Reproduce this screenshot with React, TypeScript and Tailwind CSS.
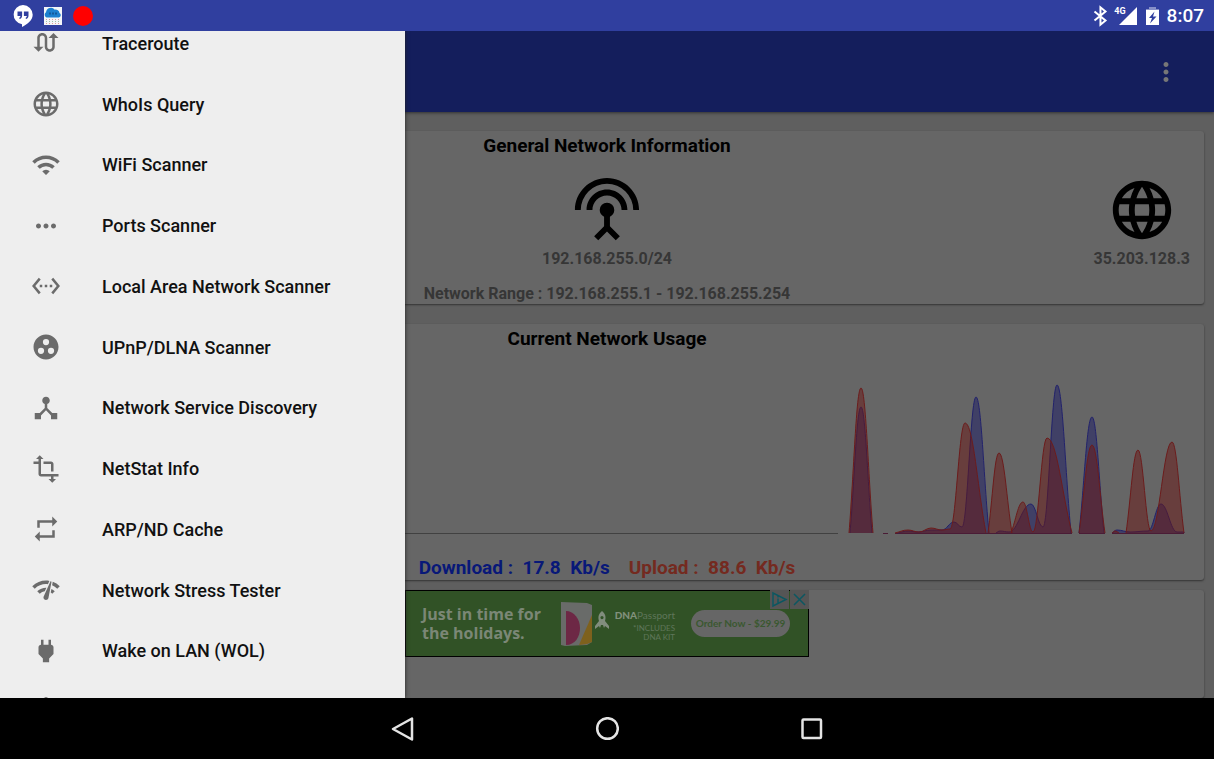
import type { ComponentType, ReactNode } from "react";
import {
  MdGroupWork,
  MdLanguage,
  MdMoreHoriz,
  MdMoreVert,
  MdNetworkCheck,
  MdPower,
  MdRepeat,
  MdSettingsEthernet,
  MdSettingsInputAntenna,
  MdSwapCalls,
  MdTransform,
  MdWifi,
} from "react-icons/md";

type IconType = ComponentType<{ className?: string }>;

const menu: { label: string; icon: IconType }[] = [
  { label: "Traceroute", icon: MdSwapCalls },
  { label: "WhoIs Query", icon: MdLanguage },
  { label: "WiFi Scanner", icon: MdWifi },
  { label: "Ports Scanner", icon: MdMoreHoriz },
  { label: "Local Area Network Scanner", icon: MdSettingsEthernet },
  { label: "UPnP/DLNA Scanner", icon: MdGroupWork },
  { label: "Network Service Discovery", icon: HubIcon },
  { label: "NetStat Info", icon: MdTransform },
  { label: "ARP/ND Cache", icon: MdRepeat },
  { label: "Network Stress Tester", icon: MdNetworkCheck },
  { label: "Wake on LAN (WOL)", icon: MdPower },
];

function HubIcon({ className }: { className?: string }) {
  return (
    <svg viewBox="0 0 24 24" fill="currentColor" className={className} aria-hidden="true">
      <path d="M17 16l-4-4V8.82C14.16 8.4 15 7.3 15 6c0-1.66-1.34-3-3-3S9 4.34 9 6c0 1.3.84 2.4 2 2.82V12l-4 4H3v5h5v-3.05l4-4.2 4 4.2V21h5v-5h-4z" />
    </svg>
  );
}

function ShieldIcon({ className }: { className?: string }) {
  return (
    <svg viewBox="0 1 24 24" fill="currentColor" className={className} aria-hidden="true">
      <path d="M12 1L3 5v6c0 5.550 3.840 10.740 9 12 5.160-1.260 9-6.450 9-12V5z" />
    </svg>
  );
}

const BASE = 533;

type Point = [number, number];

/* Smooth line through the samples: flat at crests, leaning where it leaves the base line. */
function curve(points: Point[]) {
  let d = `M${points[0][0]} ${points[0][1]}`;
  for (let i = 1; i < points.length; i++) {
    const [x0, y0] = points[i - 1];
    const [x1, y1] = points[i];
    const dx = (x1 - x0) * 0.4;
    const lean = (y1 - y0) * 0.4;
    const c0 = y0 >= BASE ? y0 + lean : y0;
    const c1 = y1 >= BASE ? y1 - lean : y1;
    d += `C${x0 + dx} ${c0} ${x1 - dx} ${c1} ${x1} ${y1}`;
  }
  return d;
}

const download: Point[][] = [
  [[850, 533], [861, 407], [872, 533]],
  [[898, 533], [908, 531], [918, 532], [931, 530], [942, 530], [954, 522], [962, 527], [976, 397], [989, 533]],
  [[996, 533], [1000, 531], [1009, 532], [1031, 504], [1043, 527], [1057, 385], [1071, 533]],
  [[1079, 533], [1092, 417], [1104, 533]],
  [[1112, 533], [1117, 530], [1130, 532], [1148, 531], [1161, 504], [1177, 532], [1184, 532], [1184, 533]],
];

const upload: Point[][] = [
  [[849, 533], [861, 388], [873, 533]],
  [[895, 533], [908, 530], [919, 532], [931, 528], [942, 530], [950, 529], [965, 423], [986, 533]],
  [[988, 533], [999, 453], [1012, 533]],
  [[1011, 533], [1023, 502], [1033, 532], [1047, 438], [1072, 533]],
  [[1079, 533], [1092, 445], [1105, 533]],
  [[1112, 533], [1115, 531], [1119, 533]],
  [[1126, 533], [1138, 450], [1151, 531], [1172, 442], [1184, 533]],
];

function UsageChart() {
  return (
    <svg
      viewBox="10 370 1194 170"
      preserveAspectRatio="none"
      className="h-[170px] w-full"
      role="img"
      aria-label="Network usage over time"
    >
      <path d="M10 533.5H838" stroke="#414141" />
      <path d="M883 533.5H888M895 533.5H1072M1079 533.5H1105M1112 533.5H1184" stroke="#4a1c36" />
      {download.map((points, i) => (
        <path key={i} d={curve(points)} fill="#1a1a66" fillOpacity="0.5" stroke="#22226c" />
      ))}
      {upload.map((points, i) => (
        <path key={i} d={curve(points)} fill="#6a1614" fillOpacity="0.5" stroke="#6c1c1c" />
      ))}
    </svg>
  );
}

function Card({ title, className, children }: { title?: string; className: string; children?: ReactNode }) {
  return (
    <section className={`rounded-[3px] bg-[#666] shadow-[0_1px_2px_#333] ${className}`}>
      {title && <h2 className="pt-[3px] text-center text-[19px] leading-6 font-bold text-black">{title}</h2>}
      {children}
    </section>
  );
}

function StatusBar() {
  return (
    <header className="flex h-[31px] shrink-0 items-center justify-between bg-[#303f9f] pr-[10px] pl-[13px] text-white">
      <div className="flex items-center gap-[10px]">
        <svg viewBox="0 0 20 22" className="h-[22px] w-5" aria-label="Hangouts">
          <path d="M10 0a9.7 9.7 0 0 0-1 19.3V22c5-2.500 10.700-6.500 10.700-12.200A9.800 9.800 0 0 0 10 0z" fill="#fff" />
          <path d="M4.500 6.500h4.600v4.300c0 2-1.200 3-2.700 3.200v-1.500c.8-.3 1-.8 1-1.500H4.500zM10.900 6.500h4.600v4.300c0 2-1.200 3-2.700 3.200v-1.500c.8-.3 1-.8 1-1.500h-2.900z" fill="#303f9f" />
        </svg>
        <svg viewBox="0 0 20 18" className="h-[18px] w-5" aria-label="Weather">
          <path d="M1 0h18v18H1z" fill="#f4f6f8" />
          <path d="M3.500 10.500a3 3 0 0 1-.5-5.300 5 5 0 0 1 8.800-2.500 4 4 0 0 1 4.700 3.200 2.500 2.500 0 0 1-.6 4.600z" fill="#1d80cf" />
          <path d="M6 6.500h8" stroke="#155a9c" strokeWidth="2" strokeDasharray="2 1" />
          <path d="M3 12.500h15M3 16.500h15" stroke="#e29a9a" strokeDasharray="1 2" />
          <path d="M3 14.500h15" stroke="#9cbfa6" strokeDasharray="1 2" />
        </svg>
        <span className="size-5 rounded-full bg-[#f00]" />
      </div>
      <div className="flex items-center">
        <svg viewBox="0 0 24 24" className="size-[22px]" aria-label="Bluetooth">
          <path
            d="M6 7l12 10-5.500 4.500v-19L18 7 6 17"
            fill="none"
            stroke="#fff"
            strokeWidth="2.200"
          />
        </svg>
        <span className="ml-[3px] -mt-[9px] text-[9px] leading-[10px] font-bold">4G</span>
        <svg viewBox="0 0 18 18" className="-ml-[7px] size-[18px]" aria-label="Signal">
          <path d="M18 0v18H0z" fill="#fff" />
        </svg>
        <svg viewBox="0 0 13 18" className="ml-[9px] h-[18px] w-[13px]" aria-label="Battery charging">
          <path d="M3 0h7v2h3v3H0V2h3z" fill="#8790c8" />
          <path d="M0 3h13v15H0z" fill="#fff" />
          <path d="M8.500 4.500L3 11h3l-2 5.500L10.500 9.500H7z" fill="#303f9f" />
        </svg>
        <span className="ml-2 text-[19px] leading-6 font-medium">8:07</span>
      </div>
    </header>
  );
}

function AdBanner() {
  return (
    <a
      href="#offer"
      className="relative mx-auto flex h-[67px] w-[404px] items-center border border-black bg-[#315226] pl-4 text-[#7b8776]"
    >
      <span className="w-[137px] font-['Open_Sans',sans-serif] text-[16px] leading-[19px] font-bold">
        Just in time for the holidays.
      </span>
      <svg viewBox="0 0 36 48" className="h-12 w-9 shrink-0" aria-hidden="true">
        <path d="M2 2l26 1 5 2v37l-5 3-22 1-4-1z" fill="#696b69" />
        <path d="M7 11c8 0 14 8 14 17 0 9-5 17-14 17z" fill="#6d2845" />
        <path d="M33 15v27l-5 2-8 1z" fill="#7e611d" />
      </svg>
      <svg viewBox="0 0 14 18" className="-mt-2 h-[18px] w-[14px] shrink-0" aria-hidden="true">
        <path d="M7 0c4 3 4 7 3 10l4 5v3l-4-3-1 2-1-3H6l-1 3-1-2-4 3v-3l4-5C3 7 3 3 7 0zm0 5a1.600 1.600 0 1 0 0 3.200A1.600 1.600 0 0 0 7 5z" fill="#818d7d" />
      </svg>
      <span className="flex w-[66px] flex-col items-end pt-1 font-['Lato',sans-serif] text-[8px] leading-[9px] text-[#5f765a]">
        <span className="pb-[3px] text-[10px] leading-3 whitespace-nowrap">
          <b className="font-black text-[#81907c]">DNA</b>Passport
        </span>
        <span>*INCLUDES</span>
        <span>DNA KIT</span>
      </span>
      <span className="ml-4 w-[99px] shrink-0 rounded-full bg-[#666] text-center font-['Lato',sans-serif] text-[10px] leading-[27px] font-bold whitespace-nowrap text-[#3a5830]">
        Order Now - $29.99
      </span>
      <span className="absolute -top-px -right-px flex gap-px">
        <svg viewBox="0 0 19 19" className="size-[19px] bg-[#555]" aria-hidden="true">
          <path d="M3 3v13l13-6.500zM8 8.500v5M8 6v1.500" fill="none" stroke="#0c5761" strokeWidth="1.500" />
        </svg>
        <svg viewBox="0 0 19 19" className="size-[19px] bg-[#555]" aria-hidden="true">
          <path d="M4 4l11 11M15 4L4 15" fill="none" stroke="#0c5761" strokeWidth="1.500" />
        </svg>
      </span>
    </a>
  );
}

function Drawer() {
  return (
    <nav className="absolute inset-y-0 left-0 w-1/3 overflow-hidden bg-[#eee] shadow-[0_0_4px_#222]">
      <ul className="-mt-[18px] grid h-[calc(100%+62px)] grid-rows-12">
        {menu.map(({ label, icon: Icon }) => (
          <li key={label} className="min-h-0">
            <a href="#tool" className="flex h-full items-center gap-[41px] pl-[31px] text-[18px] font-medium text-[#111]">
              <Icon className="size-[30px] text-[#6b6b6b]" />
              {label}
            </a>
          </li>
        ))}
        <li className="flex min-h-0 items-center pl-[31px]">
          <ShieldIcon className="size-[30px] text-[#6b6b6b]" />
        </li>
      </ul>
    </nav>
  );
}

export default function App() {
  return (
    <div className="flex h-screen flex-col overflow-hidden bg-black font-['Roboto',sans-serif]">
      <StatusBar />
      <div className="relative min-h-0 flex-1 overflow-hidden bg-[#5f5f5f]">
        <div className="flex h-full flex-col">
          <div className="flex h-[81px] shrink-0 items-center justify-end bg-[#141e5c] pr-[33px] text-[#777] shadow-[0_1px_3px_#333]">
            <button type="button" aria-label="More options">
              <MdMoreVert className="size-[30px]" />
            </button>
          </div>
          <main className="flex min-h-0 flex-1 flex-col px-[10px] pt-[19px]">
            <Card title="General Network Information" className="h-[173px] shrink-0">
              <div className="flex justify-center px-[14px] pt-[17px] text-[16px] leading-5 font-bold text-[#363636]">
                <div className="flex-1" />
                <div className="flex flex-col items-center">
                  <MdSettingsInputAntenna className="size-[70px] text-black" />
                  <span className="pt-1">192.168.255.0/24</span>
                </div>
                <div className="flex flex-1 justify-end">
                  <div className="flex flex-col items-center">
                    <MdLanguage className="size-[70px] text-black" />
                    <span className="pt-1">35.203.128.3</span>
                  </div>
                </div>
              </div>
              <p className="pt-[15px] text-center text-[16px] leading-5 font-bold text-[#363636]">
                Network Range : 192.168.255.1 - 192.168.255.254
              </p>
            </Card>
            <Card title="Current Network Usage" className="mt-5 h-[256px] shrink-0">
              <div className="pt-[19px]">
                <UsageChart />
              </div>
              <p className="flex justify-center gap-[19px] pt-4 text-[19px] leading-6 font-bold whitespace-pre">
                <span className="text-[#081878]">{"Download :  17.8  Kb/s"}</span>
                <span className="text-[#742a1f]">{"Upload :  88.6  Kb/s"}</span>
              </p>
            </Card>
            <Card className="mt-[10px] min-h-0 flex-1">
              <AdBanner />
            </Card>
          </main>
        </div>
        <Drawer />
      </div>
      <footer className="flex h-[61px] shrink-0 items-center justify-center gap-[180px] text-[#e4e4e4]">
        <button type="button" aria-label="Back">
          <svg viewBox="0 0 24 24" className="size-6" fill="none" stroke="currentColor" strokeWidth="2.500" strokeLinejoin="round">
            <path d="M21 1.500v21L2 12z" />
          </svg>
        </button>
        <button type="button" aria-label="Home">
          <svg viewBox="0 0 24 24" className="size-6" fill="none" stroke="currentColor" strokeWidth="2.500">
            <circle cx="12.500" cy="11.500" r="10.300" />
          </svg>
        </button>
        <button type="button" aria-label="Recent apps">
          <svg viewBox="0 0 24 24" className="size-6" fill="none" stroke="currentColor" strokeWidth="2.500">
            <rect x="3.500" y="2.500" width="18.500" height="18.500" rx="1" />
          </svg>
        </button>
      </footer>
    </div>
  );
}
